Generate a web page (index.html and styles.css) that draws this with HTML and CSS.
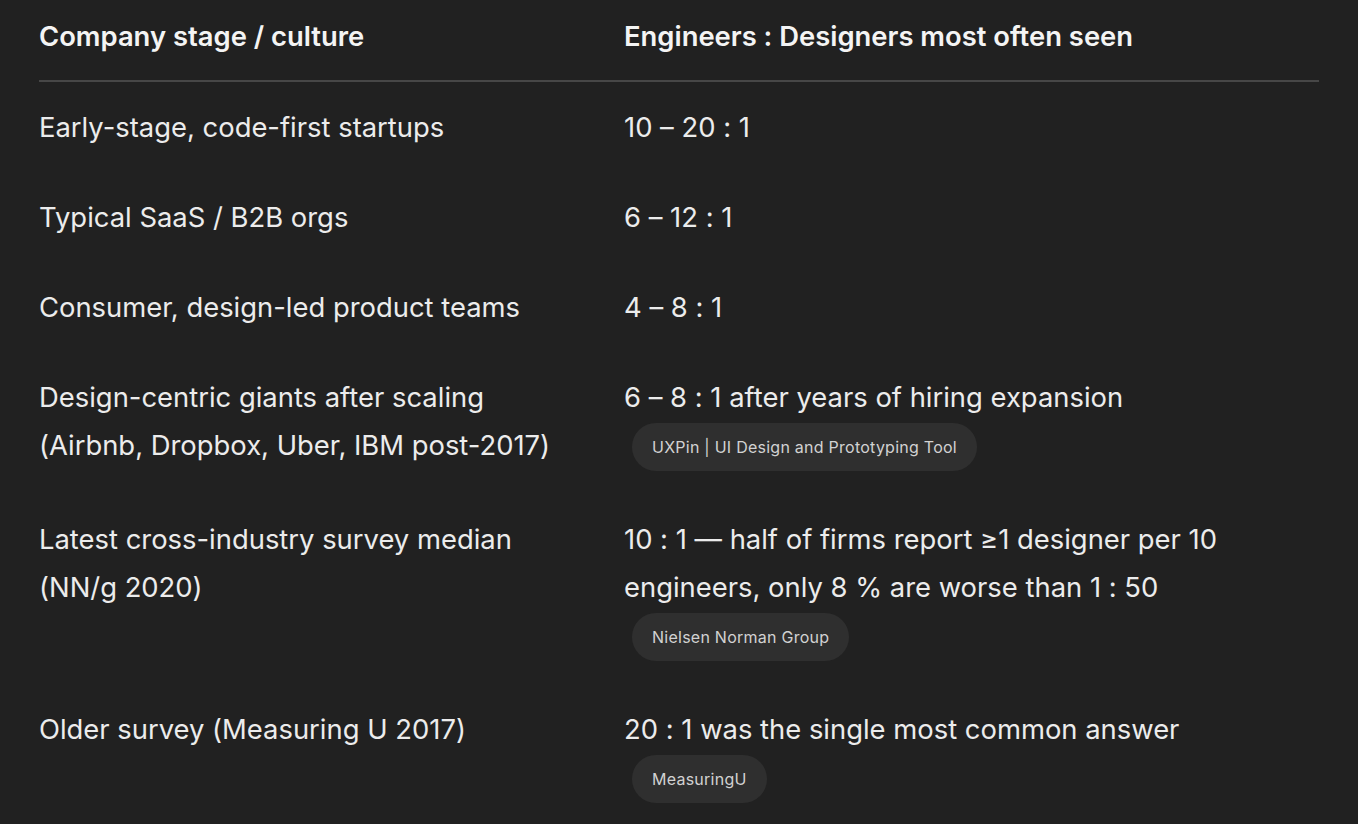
FILE: index.html
```html
<!DOCTYPE html>
<html lang="en">
<head>
<meta charset="utf-8">
<title>Engineers to designers ratio</title>
<link rel="stylesheet" href="styles.css">
</head>
<body>
<div class="wrap">
<table class="ratio">
  <thead>
    <tr>
      <th class="c1">Company stage / culture</th>
      <th class="c2">Engineers : Designers most often seen</th>
    </tr>
  </thead>
  <tbody>
    <tr>
      <td class="c1">Early-stage, code-first startups</td>
      <td class="c2">10 – 20 : 1</td>
    </tr>
    <tr>
      <td class="c1">Typical SaaS / B2B orgs</td>
      <td class="c2">6 – 12 : 1</td>
    </tr>
    <tr>
      <td class="c1">Consumer, design-led product teams</td>
      <td class="c2">4 – 8 : 1</td>
    </tr>
    <tr>
      <td class="c1">Design-centric giants after scaling (Airbnb, Dropbox, Uber, IBM post-2017)</td>
      <td class="c2">6 – 8 : 1 after years of hiring expansion <span class="pill">UXPin | UI Design and Prototyping Tool</span></td>
    </tr>
    <tr>
      <td class="c1">Latest cross-industry survey median (NN/g 2020)</td>
      <td class="c2">10 : 1 — half of firms report ≥1 designer per 10 engineers, only 8 % are worse than 1 : 50 <span class="pill">Nielsen Norman Group</span></td>
    </tr>
    <tr>
      <td class="c1">Older survey (Measuring U 2017)</td>
      <td class="c2">20 : 1 was the single most common answer <span class="pill">MeasuringU</span></td>
    </tr>
  </tbody>
</table>
</div>
</body>
</html>
```
FILE: styles.css
```css
html, body {
  margin: 0;
  padding: 0;
  background: #212121;
}
body {
  font-family: Inter, "Noto Sans", sans-serif;
  font-feature-settings: "calt" 0;
  color: #ececec;
}
.wrap {
  padding: 12px 39px 0 39px;
}
.ratio {
  width: 100%;
  border-collapse: collapse;
  font-size: 27.4px;
  line-height: 48px;
}
.ratio th {
  text-align: left;
  font-weight: 600;
  padding: 0 0 20px 0;
  border-bottom: 2px solid #474747;
  color: #f4f4f4;
}
.ratio td {
  vertical-align: top;
  padding: 21px 0;
  font-weight: 400;
}
.ratio .c1 {
  box-sizing: border-box;
  width: 585px;
  padding-right: 40px;
}
.pill {
  display: block;
  width: fit-content;
  margin: 2px 0 2px 8px;
  padding: 0 20px;
  height: 48px;
  line-height: 48px;
  border-radius: 24px;
  background: #2f2f2f;
  color: #d2d2d2;
  font-size: 16px;
  letter-spacing: 0.25px;
}
```
